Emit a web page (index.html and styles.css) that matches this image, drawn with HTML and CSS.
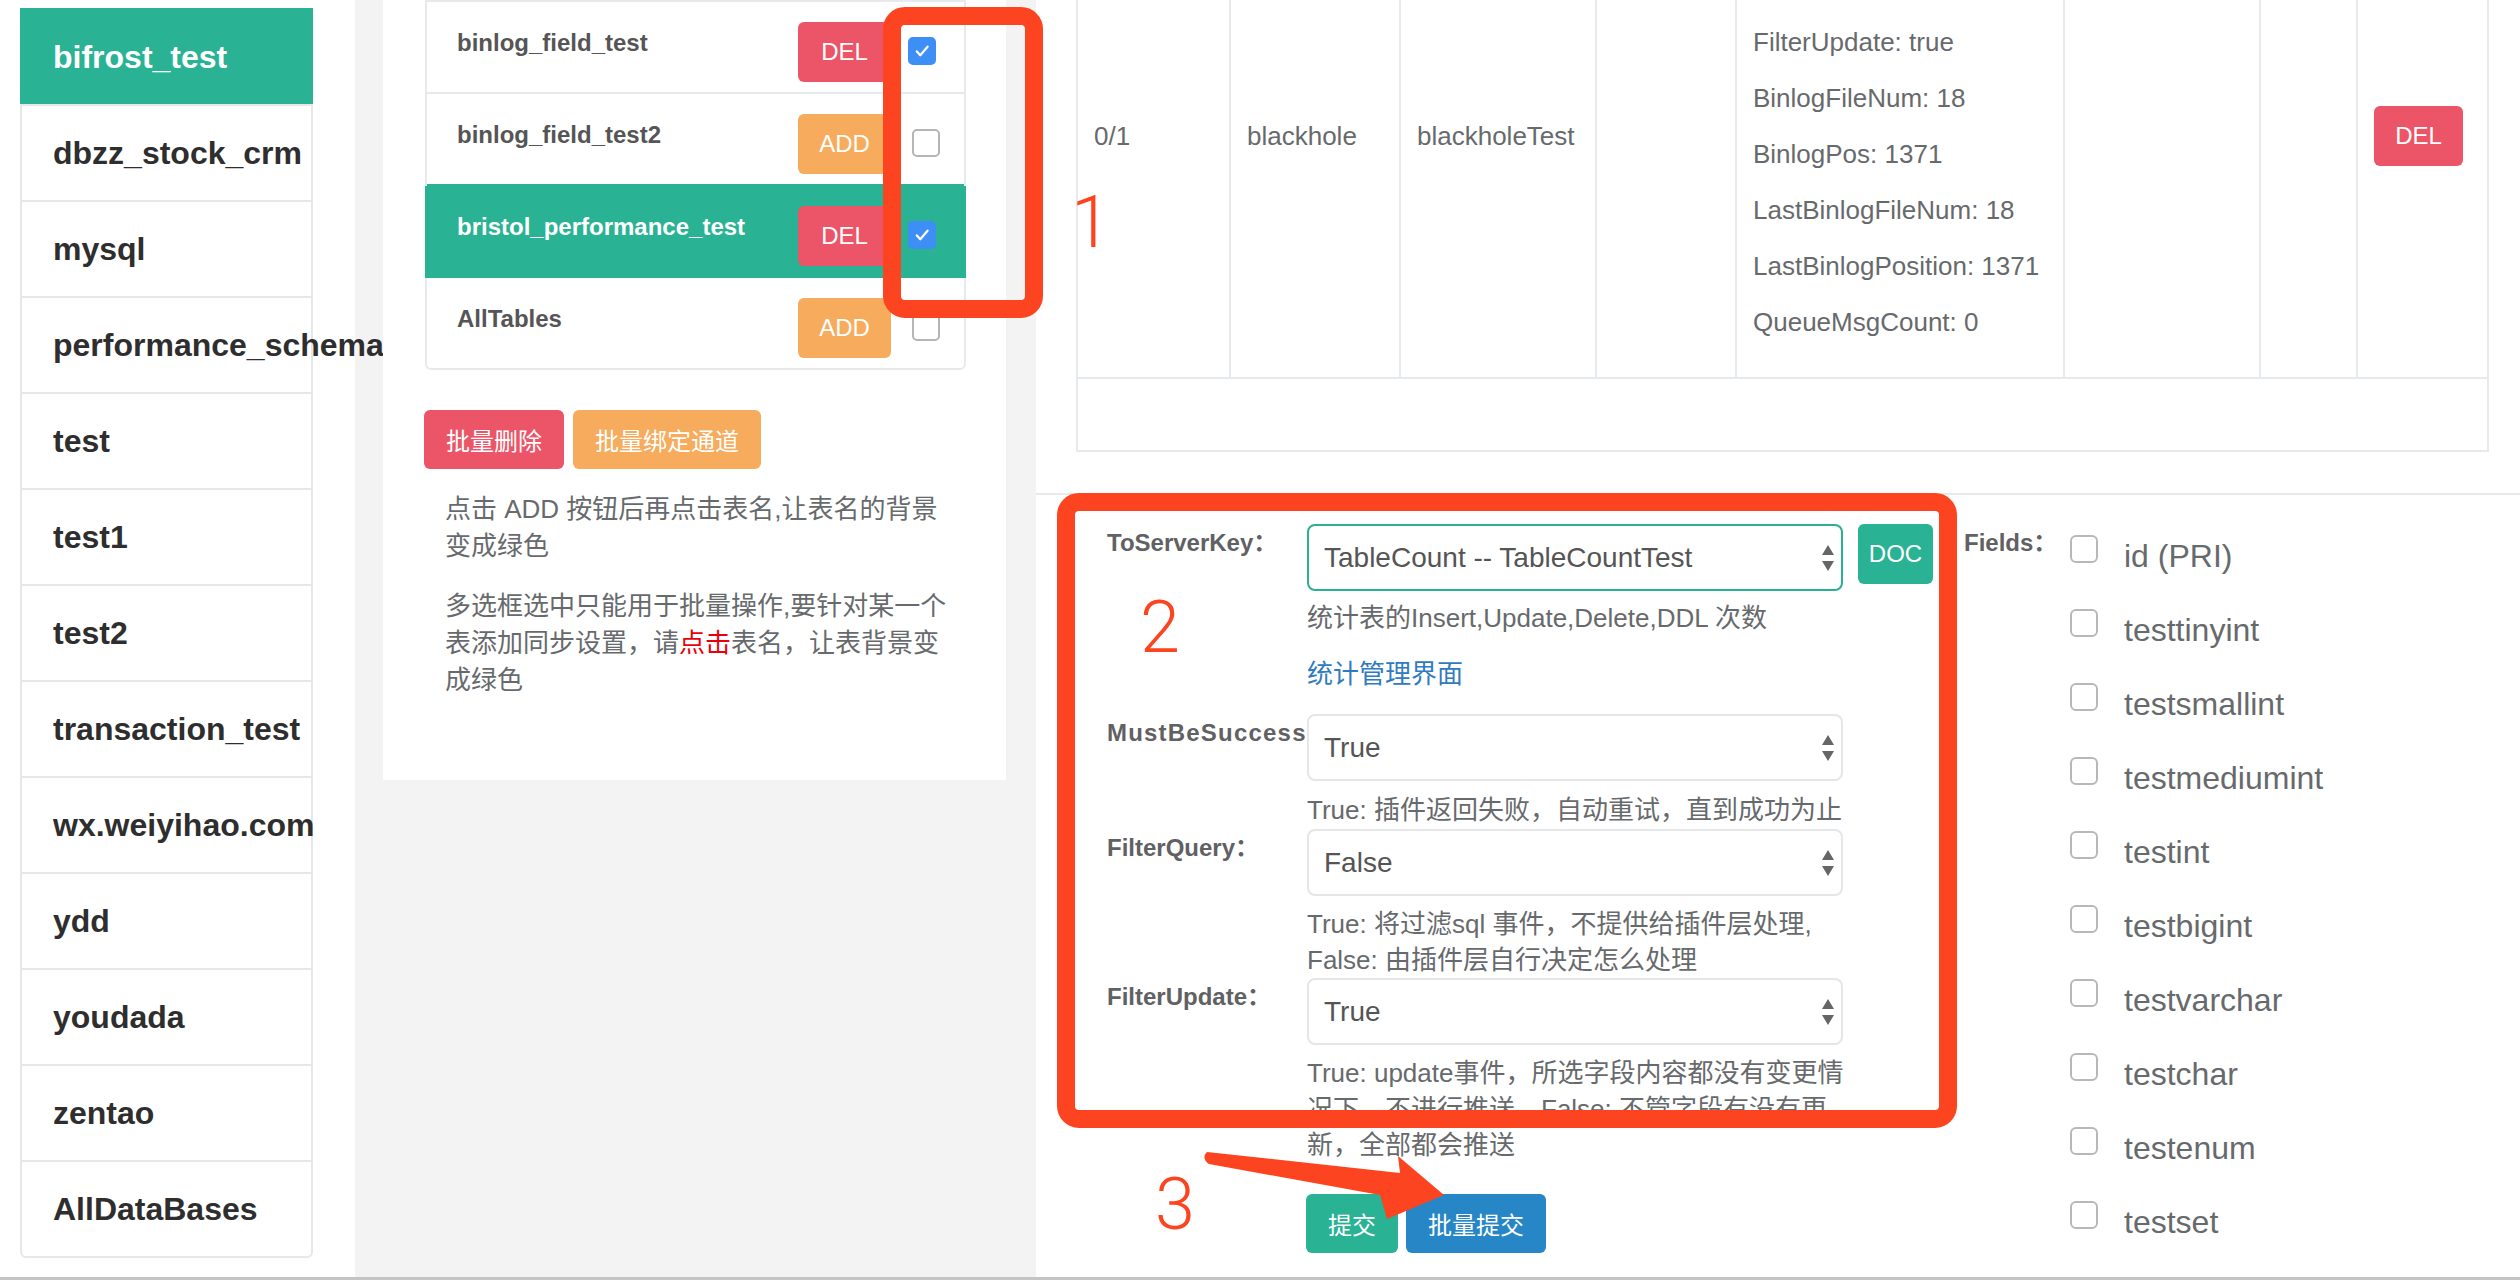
FILE: index.html
```html
<!DOCTYPE html>
<html lang="zh-CN">
<head>
<meta charset="utf-8">
<title>Bifrost</title>
<link rel="stylesheet" href="styles.css">
</head>
<body>
<div class="page">
  <aside class="col-db">
    <ul class="db-list">
      <li class="active">bifrost_test</li>
      <li>dbzz_stock_crm</li>
      <li>mysql</li>
      <li>performance_schema</li>
      <li>test</li>
      <li>test1</li>
      <li>test2</li>
      <li>transaction_test</li>
      <li>wx.weiyihao.com</li>
      <li>ydd</li>
      <li>youdada</li>
      <li>zentao</li>
      <li>AllDataBases</li>
    </ul>
  </aside>

  <section class="col-tables">
    <div class="tbl-list">
      <div class="tbl-row">
        <span class="tbl-name">binlog_field_test</span>
        <button class="btn btn-sm btn-danger">DEL</button>
        <span class="cb checked"><svg viewBox="0 0 28 28"><path d="M8 14.5l4 4.5 8.5-10" /></svg></span>
      </div>
      <div class="tbl-row">
        <span class="tbl-name">binlog_field_test2</span>
        <button class="btn btn-sm btn-warning">ADD</button>
        <span class="cb"></span>
      </div>
      <div class="tbl-row active">
        <span class="tbl-name">bristol_performance_test</span>
        <button class="btn btn-sm btn-danger">DEL</button>
        <span class="cb checked"><svg viewBox="0 0 28 28"><path d="M8 14.5l4 4.5 8.5-10" /></svg></span>
      </div>
      <div class="tbl-row">
        <span class="tbl-name">AllTables</span>
        <button class="btn btn-sm btn-warning">ADD</button>
        <span class="cb"></span>
      </div>
    </div>
    <div class="batch-btns">
      <button class="btn btn-md btn-danger">批量删除</button>
      <button class="btn btn-md btn-warning">批量绑定通道</button>
    </div>
    <div class="help">
      <p>点击 ADD 按钮后再点击表名,让表名的背景变成绿色</p>
      <p>多选框选中只能用于批量操作,要针对某一个表添加同步设置，请<span class="hl">点击</span>表名，让表背景变成绿色</p>
    </div>
  </section>

  <main class="col-main">
    <table class="chan-table">
      <colgroup>
        <col class="w153"><col class="w170"><col class="w196"><col class="w140"><col class="w328"><col class="w196"><col class="w97"><col class="w131">
      </colgroup>
      <tr>
        <td>0/1</td>
        <td>blackhole</td>
        <td>blackholeTest</td>
        <td></td>
        <td class="info">
          <div>FilterUpdate: true</div>
          <div>BinlogFileNum: 18</div>
          <div>BinlogPos: 1371</div>
          <div>LastBinlogFileNum: 18</div>
          <div>LastBinlogPosition: 1371</div>
          <div>QueueMsgCount: 0</div>
        </td>
        <td></td>
        <td></td>
        <td><button class="btn btn-tdel btn-danger">DEL</button></td>
      </tr>
      <tr class="empty-row"><td colspan="8"></td></tr>
    </table>

    <div class="form-area">
      <div class="form-left">
        <div class="form-row row-a">
          <label class="flabel">ToServerKey：</label>
          <div class="ctrl">
            <div class="ctrl-line">
              <div class="select focus"><span>TableCount -- TableCountTest</span><svg class="arr" viewBox="0 0 12 26"><path d="M0 10L6 0l6 10zM0 16h12l-6 10z"/></svg></div>
              <button class="btn btn-doc btn-primary">DOC</button>
            </div>
            <p class="hint">统计表的Insert,Update,Delete,DDL 次数</p>
            <a class="link">统计管理界面</a>
          </div>
        </div>
        <div class="form-row row-b">
          <label class="flabel wide">MustBeSuccess：</label>
          <div class="ctrl">
            <div class="select"><span>True</span><svg class="arr" viewBox="0 0 12 26"><path d="M0 10L6 0l6 10zM0 16h12l-6 10z"/></svg></div>
            <p class="hint hint-b">True: 插件返回失败，自动重试，直到成功为止</p>
          </div>
        </div>
        <div class="form-row row-c">
          <label class="flabel">FilterQuery：</label>
          <div class="ctrl">
            <div class="select"><span>False</span><svg class="arr" viewBox="0 0 12 26"><path d="M0 10L6 0l6 10zM0 16h12l-6 10z"/></svg></div>
            <p class="hint">True: 将过滤sql 事件，不提供给插件层处理,<br>False: 由插件层自行决定怎么处理</p>
          </div>
        </div>
        <div class="form-row row-d">
          <label class="flabel">FilterUpdate：</label>
          <div class="ctrl">
            <div class="select"><span>True</span><svg class="arr" viewBox="0 0 12 26"><path d="M0 10L6 0l6 10zM0 16h12l-6 10z"/></svg></div>
            <p class="hint">True: update事件，所选字段内容都没有变更情<br>况下，不进行推送，False: 不管字段有没有更<br>新，全部都会推送</p>
          </div>
        </div>
        <div class="submit-btns">
          <button class="btn btn-md btn-primary">提交</button>
          <button class="btn btn-md btn-success">批量提交</button>
        </div>
      </div>

      <div class="fields">
        <label class="flabel fields-label">Fields：</label>
        <ul class="field-list">
          <li><span class="fcb"></span><span>id (PRI)</span></li>
          <li><span class="fcb"></span><span>testtinyint</span></li>
          <li><span class="fcb"></span><span>testsmallint</span></li>
          <li><span class="fcb"></span><span>testmediumint</span></li>
          <li><span class="fcb"></span><span>testint</span></li>
          <li><span class="fcb"></span><span>testbigint</span></li>
          <li><span class="fcb"></span><span>testvarchar</span></li>
          <li><span class="fcb"></span><span>testchar</span></li>
          <li><span class="fcb"></span><span>testenum</span></li>
          <li><span class="fcb"></span><span>testset</span></li>
        </ul>
      </div>
    </div>
  </main>
</div>
<div class="bottom-line"></div>

<div class="anno-box anno-box-1"></div>
<div class="anno-box anno-box-2"></div>
<div class="anno-num anno-num-1">1</div>
<div class="anno-num anno-num-2">2</div>
<div class="anno-num anno-num-3">3</div>
<svg class="anno-arrow" viewBox="0 0 260 85"><path d="M12 7L205 28 203 11 249 50 192 74 185 50 14 19Q6 13 12 7Z"/></svg>
</body>
</html>
```

FILE: styles.css
```css
* { box-sizing: border-box; }

body {
  margin: 0;
  width: 2520px;
  height: 1288px;
  overflow: hidden;
  position: relative;
  background: #fff;
  font-family: "Liberation Sans", "Noto Sans CJK SC", sans-serif;
  color: #676a6c;
}

.page {
  display: flex;
  align-items: flex-start;
  height: 1277px;
  background: #f3f3f4;
  overflow: hidden;
}

.bottom-line {
  height: 3px;
  background: #c4c4c4;
}

/* ---------- database list ---------- */
.col-db {
  width: 355px;
  height: 100%;
  flex: none;
  background: #fff;
}

.db-list {
  list-style: none;
  margin: 8px 0 0 20px;
  padding: 0;
  width: 293px;
}

.db-list li {
  height: 98px;
  margin-bottom: -2px;
  border: 2px solid #e7e7e7;
  padding-left: 31px;
  display: flex;
  align-items: center;
  font-size: 32px;
  font-weight: bold;
  color: #2e2e2e;
  white-space: nowrap;
}

.db-list li:last-child { border-radius: 0 0 6px 6px; }

.db-list li.active {
  background: #29b293;
  border-color: #29b293;
  color: #fff;
}

/* ---------- table list column ---------- */
.col-tables {
  width: 623px;
  height: 780px;
  flex: none;
  margin-left: 28px;
  padding: 0 40px 0 42px;
  background: #fff;
}

.tbl-list {
  border: 2px solid #e7eaec;
  border-radius: 0 0 6px 6px;
  background: #fff;
}

.tbl-row {
  display: flex;
  align-items: flex-start;
  height: 92px;
  padding-right: 28px;
  border-bottom: 2px solid #e7eaec;
}

.tbl-row:last-child { border-bottom: 0; height: 90px; }

.tbl-row.active {
  background: #29b293;
  border-bottom-color: #29b293;
  box-shadow: 0 -2px 0 #29b293, -2px 0 0 #29b293, 2px 0 0 #29b293;
}

.tbl-name {
  flex: 1;
  padding: 27px 0 0 30px;
  font-size: 24px;
  line-height: 28px;
  font-weight: bold;
  color: #555;
  white-space: nowrap;
}

.tbl-row.active .tbl-name { color: #fff; }

.btn {
  border: 0;
  border-radius: 6px;
  color: #fff;
  font-family: inherit;
  font-size: 24px;
  display: inline-flex;
  align-items: center;
  justify-content: center;
  padding: 0;
  flex: none;
}

.btn-danger { background: #ec5568; }
.btn-warning { background: #f7ab5c; }
.btn-primary { background: #29b293; }
.btn-success { background: #2686c6; }

.btn-sm {
  width: 93px;
  height: 60px;
  margin-top: 20px;
}

.cb {
  width: 28px;
  height: 28px;
  margin: 35px 0 0 17px;
  border: 2px solid #b5b5b5;
  border-radius: 5px;
  background: #fff;
  flex: none;
  display: flex;
}

.cb:not(.checked) {
  margin-left: 21px;
  margin-right: -4px;
}

.cb.checked {
  background: #3d8ff5;
  border-color: #3d8ff5;
}

.cb svg {
  width: 24px;
  height: 24px;
}

.cb svg path {
  fill: none;
  stroke: #fff;
  stroke-width: 2.6;
  stroke-linecap: round;
  stroke-linejoin: round;
}

.batch-btns {
  display: flex;
  gap: 9px;
  margin: 40px 0 0 -1px;
}

.btn-md {
  height: 59px;
  padding: 0 22px;
}

.help {
  width: 530px;
  padding-left: 20px;
  font-size: 26px;
  line-height: 37px;
  color: #676a6c;
}

.help p { margin: 22px 0 0; }
.help p + p { margin-top: 23px; }
.help .hl { color: #e8000b; }

/* ---------- main column ---------- */
.col-main {
  flex: 1;
  height: 100%;
  margin-left: 30px;
  background: #fff;
}

.chan-table {
  border-collapse: collapse;
  table-layout: fixed;
  width: 1411px;
  margin: -107px 0 0 40px;
  font-size: 26px;
  color: #676a6c;
}

.w153 { width: 153px; }
.w170 { width: 170px; }
.w196 { width: 196px; }
.w140 { width: 140px; }
.w328 { width: 328px; }
.w97 { width: 97px; }
.w131 { width: 131px; }

.chan-table td {
  border: 2px solid #e7eaec;
  padding: 0 16px;
  vertical-align: middle;
  white-space: nowrap;
}

.chan-table td.info {
  padding: 119px 16px 27px;
  line-height: 56px;
}

.empty-row td { height: 73px; }

.btn-tdel {
  width: 89px;
  height: 60px;
}

.form-area {
  display: flex;
  align-items: flex-start;
  margin-top: 41px;
  border-top: 2px solid #e7eaec;
  padding: 29px 0 0 71px;
}

.form-left {
  width: 826px;
  flex: none;
}

.form-row { display: flex; }
.row-a { margin-bottom: 22px; }
.row-b { margin-bottom: 1px; }

.flabel {
  width: 200px;
  flex: none;
  padding-top: 5px;
  font-size: 24px;
  line-height: 28px;
  font-weight: bold;
  color: #5f6163;
  white-space: nowrap;
}

.flabel.wide { letter-spacing: 1.2px; }

.ctrl { width: 626px; }

.ctrl-line {
  display: flex;
  gap: 15px;
  align-items: flex-start;
}

.select {
  width: 536px;
  height: 67px;
  flex: none;
  border: 2px solid #e5e6e7;
  border-radius: 8px;
  background: #fff;
  display: flex;
  align-items: center;
  justify-content: space-between;
  padding: 0 7px 0 15px;
  font-size: 28px;
  color: #555;
  position: relative;
  z-index: 1;
}

.select.focus { border-color: #2bb092; }

.arr {
  width: 12px;
  height: 26px;
  fill: #666;
}

.btn-doc {
  width: 75px;
  height: 60px;
}

.hint {
  margin: 10px 0 0;
  width: 560px;
  font-size: 26px;
  line-height: 36px;
  color: #676a6c;
  white-space: nowrap;
}

.row-a .hint { margin-top: 9px; }
.hint-b { margin-top: 11px; }

.link {
  display: block;
  margin-top: 20px;
  font-size: 26px;
  line-height: 36px;
  color: #2f7bbf;
}

.submit-btns {
  display: flex;
  gap: 8px;
  margin: 31px 0 0 199px;
}

.fields {
  display: flex;
  margin-left: 31px;
}

.fields-label { width: 106px; }

.field-list {
  list-style: none;
  margin: -5px 0 0;
  padding: 0;
}

.field-list li {
  display: flex;
  align-items: flex-start;
  height: 74px;
  font-size: 32px;
  line-height: 74px;
  color: #676a6c;
  white-space: nowrap;
}

.fcb {
  width: 28px;
  height: 28px;
  margin: 16px 26px 0 0;
  border: 2px solid #b8b8b8;
  border-radius: 6px;
  background: #fff;
  flex: none;
}

/* ---------- annotations (overlay) ---------- */
.anno-box {
  position: absolute;
  border: 18px solid #fc4520;
  border-radius: 22px;
  pointer-events: none;
}

.anno-box-1 { left: 883px; top: 7px; width: 160px; height: 311px; }
.anno-box-2 { left: 1057px; top: 493px; width: 900px; height: 635px; }

.anno-num {
  position: absolute;
  font-family: Roboto, "Liberation Sans", sans-serif;
  font-weight: 300;
  font-size: 72px;
  line-height: 72px;
  color: #fc4520;
}

.anno-num-1 { left: 1071px; top: 187px; }
.anno-num-2 { left: 1140px; top: 592px; }
.anno-num-3 { left: 1155px; top: 1169px; }

.anno-arrow {
  position: absolute;
  left: 1195px;
  top: 1145px;
  width: 260px;
  height: 85px;
  fill: #fc4520;
}
```
